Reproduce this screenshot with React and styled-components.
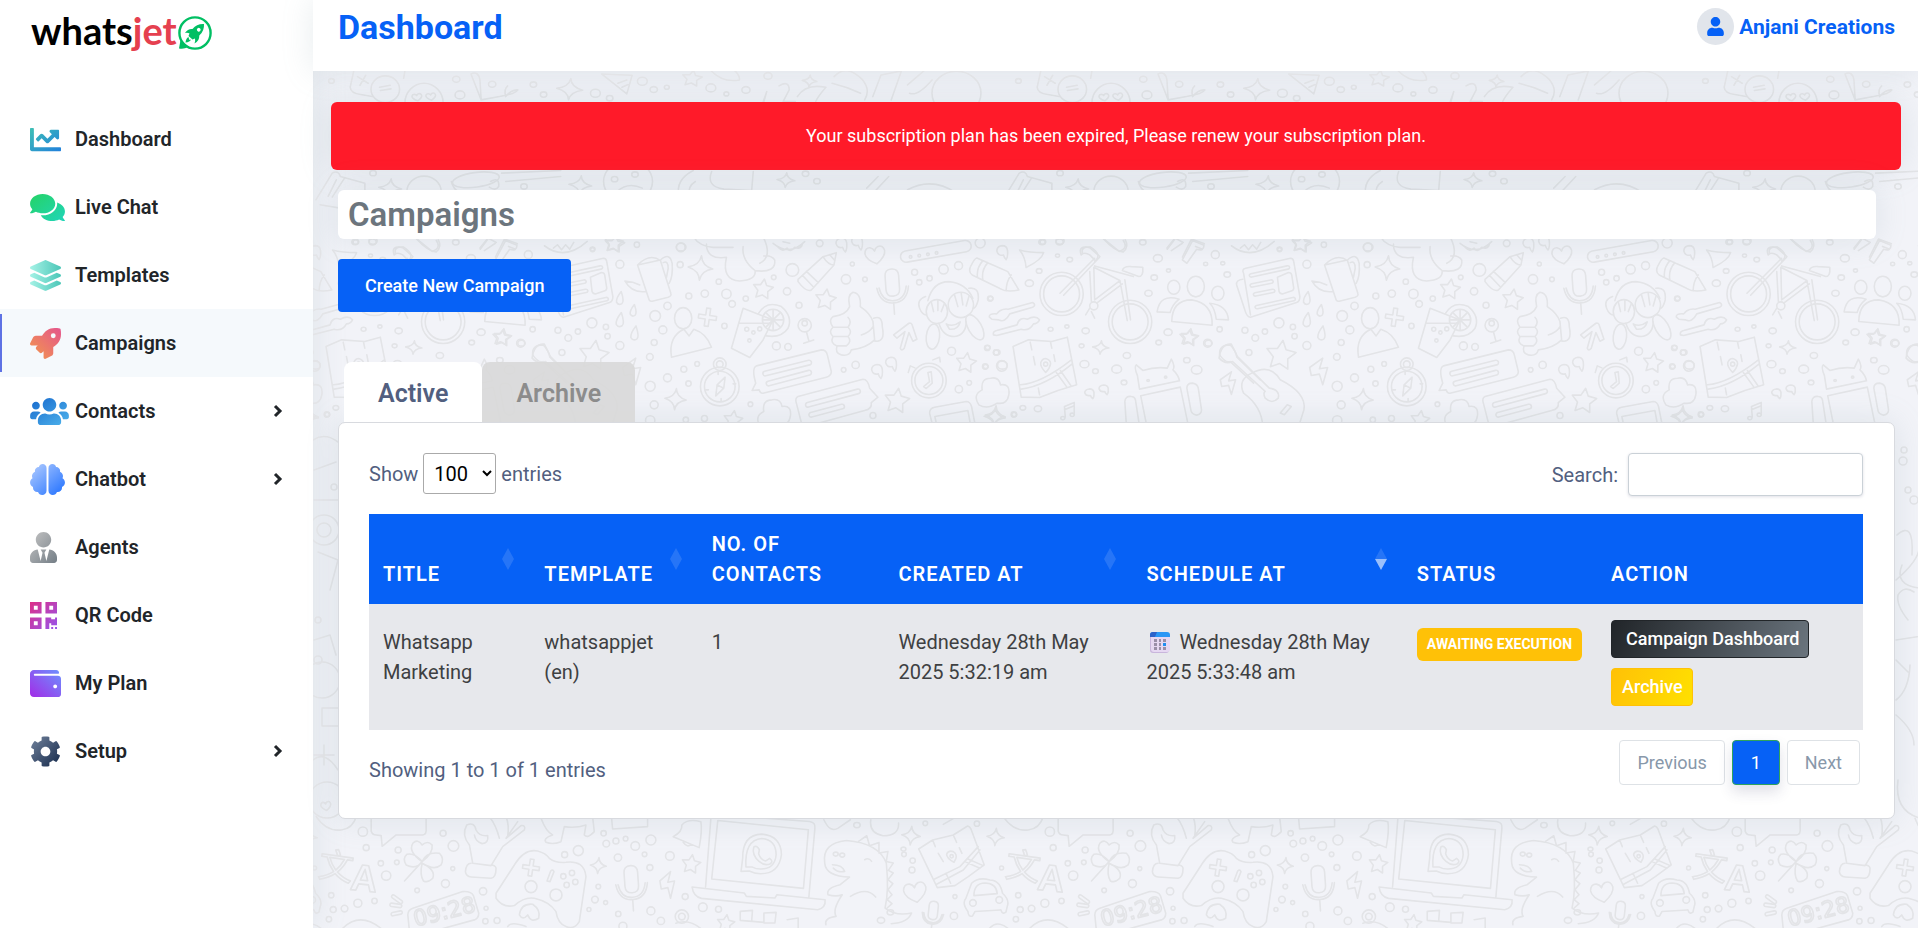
import React, { useState } from "react";
import styled, { createGlobalStyle } from "styled-components";
import {
  FaBrain,
  FaChartLine,
  FaCog,
  FaComments,
  FaLayerGroup,
  FaQrcode,
  FaRocket,
  FaUser,
  FaUsers,
  FaUserTie,
  FaWallet,
} from "react-icons/fa";

/* ---------- doodle wallpaper ---------- */

const TILE_WIDTH = 687;
const TILE_HEIGHT = 857;

const path = (d) => `<path d="${d}"/>`;
const oval = (x, y, rx, ry = rx, turn = 0) =>
  `<ellipse cx="${x}" cy="${y}" rx="${rx}" ry="${ry}" transform="rotate(${turn} ${x} ${y})"/>`;
const at = (x, y, size, turn, d) =>
  `<g transform="translate(${x} ${y}) rotate(${turn}) scale(${size})">${path(d)}</g>`;
const star = (x, y, r, turn = 8) =>
  at(x, y, r / 10, turn, "M0-10L3-4L10-3L5 2L6 9L0 6L-6 9L-5 2L-10-3L-3-4Z");
const spark = (x, y, r) =>
  at(x, y, r / 10, 5, "M0-10Q1-2 10 0Q1 2 0 10Q-1 2-10 0Q-1-2 0-10Z");
const heart = (x, y, r, turn = -10) =>
  at(x, y, r / 10, turn, "M0 9Q-10 3-10-3Q-9-9-4-8Q-1-7 0-4Q1-7 4-8Q9-9 10-3Q10 3 0 9Z");
const bolt = (x, y, r) => at(x, y, r / 10, 0, "M3-10L-5-3L-4 3L1 2L3 10L6-3L1-2Z");
const drop = (x, y, r) => at(x, y, r / 10, 0, "M2-10Q7 5 3 8Q-2 11-5 6Q-6 0 2-10Z");
const quote = (x, y, r) =>
  at(x, y, r / 10, 0, "M6 12Q9 8 8-2Q7-9 0-9Q-8-8-8-1Q-6 7 2 5Q3 9 6 12Z");
const cloud = (x, y, r) =>
  at(x, y, r / 10, 0, "M-8 8Q-12 2-6-1Q-7-8-1-8Q4-9 5-4Q11-5 10 2Q9 8 3 7Q-3 11-8 8Z");
const pill = (x, y, w, h, turn) =>
  `<rect x="${x}" y="${y}" width="${w}" height="${h}" rx="${h / 2}" transform="rotate(${turn} ${x} ${y})"/>`;
const plus = (x, y, r) =>
  at(x, y, r / 10, 8, "M-2-9H2V-2H9V2H2V9H-2V2H-9V-2H-2Z");
const dots = (list) => list.map(([x, y, r]) => oval(x, y, r)).join("");
const mic = (x, y, r, turn = -4) =>
  at(
    x,
    y,
    r / 10,
    turn,
    "M-3-7Q-3-10 0-10Q3-10 3-7V-1Q3 2 0 2Q-3 2-3-1ZM-7-2Q-6 5 0 5Q6 5 7-2M-6-2Q-5 4 0 4Q5 4 6-2M0 5V10"
  );

const upperRow = [
  path("M85 200L74 262Q75 280 100 284L128 290M210 200L205 235M92 230L118 250M112 226L98 256"),
  oval(160, 268, 35, 40),
  path("M146 262L172 256M148 272L174 267"),
  oval(255, 310, 47, 60),
  heart(238, 292, 12),
  heart(272, 290, 12),
  path("M370 222L395 300L440 290Q480 282 485 270Q470 268 455 290Q450 268 460 258M370 222Q388 212 392 240L395 300"),
  spark(612, 268, 32),
  path("M690 222L765 226L752 282ZM730 250L752 240M740 262L755 254"),
  star(912, 235, 24),
  path("M950 200Q980 250 1028 240Q1030 225 1010 205"),
  path("M1085 310L1095 275L1088 305M1125 258Q1150 240 1150 270L1135 305H1165"),
  path("M1170 290Q1190 250 1240 262Q1220 290 1215 305M1260 230Q1290 190 1330 240Q1350 270 1335 300M1255 250Q1290 260 1325 280"),
  path("M1355 290L1375 225L1425 213L1400 300"),
  path("M1440 255L1480 213M1445 280Q1465 290 1500 240"),
  spark(1200, 243, 18),
  oval(1560, 280, 60, 66),
  path("M-10 600L30 520Q45 510 50 530L110 550V620M20 590L40 540M30 592L60 535M0 615L50 625L110 600"),
  spark(172, 565, 28),
  oval(255, 575, 42, 46),
  oval(382, 540, 58, 22, -10),
  path("M322 545Q330 590 390 590M418 545Q440 530 438 560Q430 575 415 562M445 520L590 512M455 545L590 530"),
  oval(755, 545, 60, 62),
  dots([[722, 538, 8], [772, 524, 8]]),
  path("M728 575Q755 545 790 565"),
  spark(638, 556, 28),
  path("M880 590Q870 540 915 512M905 590Q900 560 920 545M960 515Q945 560 990 568L1058 572L1062 515"),
  spark(1142, 541, 22),
  path("M1340 565L1368 530M1362 572L1394 530M1440 570Q1500 530 1560 580"),
  path("M392 745L412 715L432 728M430 772L452 718L484 732M462 740L478 748"),
  path("M550 738Q600 785 655 725M572 745L582 735L592 750L602 735L612 748L622 728"),
  path("M185 760Q180 740 205 742Q235 765 215 785M240 720L275 755Q298 745 285 722"),
  star(722, 733, 24),
  dots([
    [334, 238, 9], [422, 253, 9], [343, 285, 12], [523, 254, 8], [548, 284, 8],
    [675, 280, 12], [710, 295, 8], [790, 244, 12], [818, 269, 9], [850, 262, 6],
    [958, 264, 12], [996, 282, 6], [1044, 270, 10], [1098, 228, 10], [1190, 522, 8],
    [1218, 544, 8], [130, 520, 8], [500, 560, 8], [28, 243, 7], [86, 727, 8],
    [130, 724, 10], [668, 748, 6], [885, 742, 12],
  ]),
].join("");

const middleRow = [
  star(282, 345, 44),
  star(790, 147, 30),
  star(978, 178, 31),
  star(1192, 482, 37),
  star(1400, 368, 30),
  star(342, 8, 28),
  star(8, 292, 26),
  spark(602, 84, 37),
  spark(527, 478, 32),
  spark(1487, 528, 30),
  star(700, 540, 28),
  path("M413 75L448 180Q452 186 460 183L505 172Q516 168 513 160L482 62Q450 38 413 75ZL482 60M420 135Q400 125 375 123Q395 160 438 155M482 60Q510 35 517 70Q520 110 508 130M490 68Q505 60 505 85L500 112"),
  drop(360, 175, 20),
  drop(400, 212, 18),
  drop(360, 240, 22),
  drop(404, 280, 22),
  path("M895 118L970 50L1010 38L1003 75L935 150Q920 158 895 125ZM970 50Q985 75 1003 75M908 106L942 142M920 94L956 128M990 44L1004 60"),
  heart(1127, 45, 30),
  pill(1200, 36, 215, 34, -10),
  dots([[1233, 51, 4], [1259, 47, 4], [1285, 43, 4], [1311, 39, 4]]),
  path("M580 -10Q600 20 640 22H700M620 12Q620 60 680 52Q665 120 720 123Q770 120 766 92Q830 100 825 60Q815 45 792 48M730 20Q725 60 766 92M790 -10Q820 50 780 70"),
  path("M820 10Q870 50 915 5M835 22Q850 38 862 24Q872 40 885 22Q905 30 908 12M850 5L870 10"),
  mic(1180, 155, 68),
  path("M1000 230Q1040 225 1050 200Q1042 165 1060 157Q1085 160 1082 200Q1112 220 1120 245L1125 300Q1100 325 1055 330Q1050 350 1025 345Q1005 340 1012 318Q990 310 1000 290Q985 275 1000 262Q985 240 1000 230M1000 262H1045Q1058 245 1045 232M1003 290H1045Q1060 275 1045 262M1012 318H1040Q1058 305 1045 290M1122 235Q1148 225 1148 260Q1158 310 1125 303M1085 285Q1110 278 1120 260"),
  path("M730 205L695 325L750 353L790 300L820 240ZM718 250H815"),
  path("M775 222Q800 180 845 200Q880 230 865 265Q845 295 800 288"),
  oval(820, 240, 32),
  path("M820 210V270M790 240H850M799 219L841 261M841 219L799 261"),
  dots([[741, 268, 6], [780, 267, 6], [761, 278, 5], [749, 302, 5], [915, 256, 20], [915, 250, 8]]),
  path("M920 275L928 305M912 310L942 300"),
  oval(550, 235, 26, 32),
  path("M515 352Q505 290 552 268L568 288L582 268Q620 280 635 322Z"),
  plus(623, 232, 30),
  dots([[660, 440, 58], [660, 440, 46], [660, 373, 19], [660, 373, 10]]),
  path("M676 412L672 445L648 468L652 435ZM652 435L672 445M655 396V404M618 450H626M700 432H708M664 484V476"),
  path("M770 378L965 330Q980 330 983 345L995 395Q995 408 980 412L790 460Q782 462 778 450L757 452L768 430Q755 385 770 378Z"),
  pill(788, 396, 150, 14, -14),
  pill(798, 426, 140, 14, -15),
  path("M895 470L1090 418Q1105 418 1110 445L1135 472L1115 488Q1118 508 1095 512L920 560M895 470Q885 475 890 490L908 560"),
  pill(916, 490, 170, 14, -15),
  pill(926, 520, 110, 14, -15),
  cloud(822, 520, 50),
  cloud(1478, 455, 50),
  path("M1182 285L1228 250Q1236 248 1238 256L1252 298L1240 304L1228 278L1214 325Q1206 335 1202 325L1216 275L1192 295Z"),
  quote(1132, 392, 20),
  quote(1174, 370, 20),
  quote(1025, 12, 20),
  quote(1072, 6, 20),
  quote(1508, 35, 20),
  dots([[1288, 422, 52], [1288, 422, 42]]),
  path("M1285 398L1290 425L1272 440L1280 446L1298 430L1295 396ZM1300 360L1320 352L1322 366M1226 398L1232 378L1246 384"),
  path("M1285 182Q1300 125 1348 125Q1400 130 1420 175M1278 170Q1250 180 1260 205Q1268 225 1280 225M1408 145Q1440 140 1436 180Q1430 205 1420 205M1318 250Q1330 290 1365 290Q1400 285 1400 245M1340 252Q1362 262 1382 246Q1375 270 1350 268Z"),
  oval(1312, 215, 32, 36),
  oval(1384, 195, 38, 38),
  path("M1295 185L1302 215M1315 180V212M1335 190L1325 215M1365 165L1375 200M1385 160L1390 195M1408 170L1400 198"),
  oval(1300, 290, 20, 38, 6),
  oval(1426, 262, 20, 42, -30),
  path("M1432 54L1525 95L1558 150Q1520 158 1500 145L1418 105Q1405 95 1414 78Q1425 55 1432 54ZM1450 62Q1430 85 1434 112M1465 68Q1445 90 1450 120M1535 105Q1520 125 1520 153"),
  path("M1300 560L1290 520Q1290 505 1305 502L1400 485Q1412 485 1416 500L1428 560M1312 560L1306 530L1405 512L1414 560"),
  path("M98 345Q95 315 130 315Q145 330 150 352L220 420M98 345Q115 370 130 365L200 430"),
  dots([
    [543, 22, 13], [411, 14, 8], [278, 29, 6], [85, 44, 12], [360, 73, 12], [541, 74, 9],
    [657, 125, 8], [615, 161, 11], [567, 168, 9], [503, 198, 11], [466, 228, 16],
    [489, 270, 12], [463, 308, 9], [680, 162, 14], [697, 192, 10], [738, 176, 8],
    [674, 258, 8], [822, 112, 7], [878, 90, 19], [862, 154, 11], [898, 196, 9],
    [960, 10, 10], [1058, 72, 6], [1039, 118, 14], [1096, 118, 7], [1245, 97, 9],
    [1259, 127, 8], [1290, 115, 8], [1332, 88, 14], [1377, 77, 12], [1442, 9, 15],
    [830, 318, 12], [865, 321, 10], [1068, 375, 11], [1032, 390, 7], [276, 249, 15],
    [318, 261, 8], [323, 289, 8], [234, 275, 8], [174, 271, 9], [205, 294, 10],
    [98, 268, 8], [62, 310, 12], [360, 317, 12], [186, 338, 9], [450, 351, 10],
    [592, 372, 7], [552, 388, 9], [503, 414, 12], [451, 439, 15], [566, 431, 8],
    [463, 495, 12], [752, 493, 7], [451, 542, 14], [558, 540, 8], [614, 536, 9],
    [1356, 334, 12], [1463, 324, 8], [1490, 338, 8], [1457, 380, 8], [1507, 378, 16],
    [1409, 429, 7], [1378, 448, 11], [1120, 527, 9], [1472, 176, 8], [1543, 524, 8],
  ]),
].join("");

const bikeRow = [
  oval(249, 342, 53, 65),
  oval(249, 342, 44, 54),
  oval(417, 426, 53, 65),
  oval(417, 426, 44, 54),
  path("M245 340L330 235M254 346L342 232M318 275L322 365M328 262L330 360L392 302ZM330 258L425 290M335 370L398 312M392 302L410 422M404 300L418 420M297 225Q288 195 318 203L343 230M297 225Q305 215 318 225L330 240M398 272Q400 258 420 260L448 262Q450 290 438 290Z"),
  oval(328, 378, 10, 12),
  path("M318 385L308 405M322 395L330 415"),
  path("M72 412Q70 400 90 402Q100 385 118 388L178 368Q188 375 178 382L122 402Q110 430 95 420L78 418ZM82 465Q80 455 90 452L140 435Q145 410 165 418Q185 405 195 420Q190 432 180 432Q170 455 150 448L90 467Z"),
  oval(524, 322, 15, 21),
  oval(578, 320, 21, 31),
  oval(632, 340, 15, 21),
  path("M519 425Q520 360 568 360Q620 370 618 436ZM483 396Q490 340 537 358Q520 375 515 398ZM612 370Q655 375 658 420L628 418Q625 385 612 370Z"),
  path("M695 280Q690 268 700 265L810 235Q817 235 818 245L833 350Q833 365 825 368L712 412Q703 412 698 390L678 315Q676 300 693 298M695 280L712 405"),
  pill(708, 283, 102, 10, -15),
  pill(710, 313, 58, 10, -14),
  pill(718, 340, 54, 10, -14),
  pill(722, 378, 102, 10, -15),
  path("M778 292L805 278Q812 278 813 285L818 325Q818 332 810 334L790 342Q784 342 782 335Z"),
  path("M130 500L168 480L225 485L263 472L286 615L240 632L195 653L150 652ZM148 615Q200 610 273 540M150 628Q210 618 275 552M236 578L262 622M246 572L272 618M172 487L176 510M180 530L184 555M222 488L225 505M230 525L233 545M192 625L195 645"),
  path("M210 578Q196 560 198 548Q202 536 210 536Q222 540 222 552Q220 566 210 578Z"),
  oval(210, 553, 5, 6),
  path("M440 628L435 588Q426 560 432 555L448 572Q480 560 508 565L518 538Q528 560 522 570Q535 585 538 603ZM443 648L540 622L560 740M443 648L458 740M408 740L404 665Q405 648 420 650Q428 650 430 660L440 740"),
  path("M556 625Q556 610 570 610Q582 612 584 625L592 690Q592 704 580 706Q568 704 566 692Z"),
  dots([[461, 602, 3], [504, 592, 3]]),
  path("M635 535Q640 490 665 493L680 530L758 625Q785 630 780 655Q765 675 748 655Q742 640 748 635L668 545Q650 555 635 535ZM715 580Q760 550 785 600Q850 640 843 690L830 740M715 580Q680 600 695 640Q740 680 742 740M785 700L802 675L812 680L795 705Z"),
  bolt(655, 610, 34),
  bolt(877, 575, 40),
  path("M258 712L256 680L280 668V700M256 690L280 678"),
  dots([[252, 715, 5], [275, 705, 5]]),
  spark(85, 712, 26),
  spark(345, 503, 20),
  star(560, 473, 22),
  quote(317, 640, 14),
  quote(352, 628, 14),
  path("M146 210Q170 218 205 218Q200 240 162 263Q160 230 146 210Z"),
  path("M508 208L525 180M518 212L545 190M545 240L570 182L598 196Q598 215 580 208L556 250ZM350 175Q380 215 400 216Q415 200 405 180"),
  dots([
    [203, 186, 7], [244, 186, 9], [239, 227, 5], [269, 239, 7], [194, 273, 7],
    [170, 310, 10], [75, 356, 6], [222, 448, 6], [262, 440, 5], [308, 453, 9],
    [298, 498, 6], [409, 527, 9], [384, 568, 12], [305, 553, 11], [332, 574, 7],
    [402, 608, 7], [510, 457, 10], [487, 488, 7], [609, 490, 9], [556, 541, 8],
    [580, 570, 13], [511, 272, 5], [476, 293, 8], [485, 235, 11], [462, 340, 9],
    [602, 252, 5], [644, 250, 5], [655, 284, 8], [448, 187, 8], [191, 687, 9],
    [154, 684, 7], [133, 704, 6], [104, 556, 12], [63, 560, 6], [90, 518, 8], [68, 503, 6],
  ]),
].join("");

const lowerRow = [
  path("M56 102L98 75L160 60L203 33Q210 34 214 44L253 150L205 185L165 212L112 218ZM104 192L180 155L235 95M110 208L190 165L240 105M195 140L240 160M204 132L250 152M98 75L106 95M115 115L130 140M138 175L152 205M160 60L170 82M178 98L186 115"),
  path("M162 142Q140 130 140 118Q145 105 160 110Q172 118 168 130Z"),
  oval(155, 124, 5),
  spark(33, 62, 28),
  spark(287, 66, 26),
  heart(46, 232, 34),
  mic(98, 305, 46, 6),
  path("M198 250L215 205Q235 185 270 195Q300 195 308 235Q330 255 322 275L318 292Q308 300 303 285L225 290L218 303Q205 308 204 290Q185 265 198 250ZM222 242Q222 205 255 204Q290 205 292 236Z"),
  dots([[219, 264, 10], [298, 255, 10]]),
  `<text x="318" y="190" font-size="104" font-family="Noto Sans CJK SC" transform="rotate(8 360 150)">文</text>`,
  `<text x="414" y="228" font-size="112" font-weight="bold" font-family="Liberation Sans" transform="rotate(6 450 190)">A</text>`,
  path("M475 -10V48Q478 60 490 60L505 62L508 94L550 60H630Q642 58 640 40V-10"),
  path("M628 140Q585 110 600 85Q615 70 628 90Q645 75 658 90Q662 115 628 140Q640 110 680 115Q695 130 685 150Q665 168 628 145Q670 165 660 190Q645 205 632 198Q620 180 628 145M628 140Q610 165 580 150Q568 130 582 118Q605 112 628 140L575 198"),
  path("M762 30Q745 60 770 90L780 145M762 30Q785 20 790 45Q800 65 825 62Q828 85 808 86Q788 80 785 60M780 145L835 152L870 95L935 45Q940 30 925 32L880 70M860 70Q850 30 830 5M885 65Q890 30 880 5M880 70L915 20M775 145Q760 145 758 170Q760 185 775 186L835 190Q850 188 850 160Q848 150 835 150"),
  path("M850 235L905 150Q935 100 975 108Q1000 115 1010 130Q1030 145 1060 142Q1115 135 1120 185L1100 320Q1085 345 1060 335Q1035 325 1030 290Q1010 260 965 250Q935 245 905 272Q870 280 850 250Z"),
  plus(955, 158, 28),
  dots([[955, 215, 18], [1030, 240, 18], [1052, 184, 8], [1078, 174, 8], [1062, 210, 8], [1088, 201, 8]]),
  path("M1003 198L1014 168Q1020 162 1024 170L1012 200Z"),
  path("M590 350L585 300Q585 285 600 280L750 230Q775 228 782 242L798 295Q798 310 785 315L620 360"),
  `<text x="608" y="335" font-size="66" font-family="DejaVu Sans" transform="rotate(-14 608 335)">09:28</text>`,
  pill(540, 238, 38, 10, 35),
  pill(532, 264, 36, 10, 8),
  pill(534, 294, 34, 10, -12),
  path("M920 300Q925 265 960 268Q985 285 978 310Q955 325 945 300Q930 318 920 300ZM885 335Q895 318 940 335"),
  spark(1157, 152, 24),
  mic(1258, 220, 68),
  bolt(1362, 210, 40),
  star(1436, 147, 28),
  star(1540, 325, 26),
  path("M1382 65Q1410 50 1408 30Q1425 10 1465 20Q1470 45 1460 98ZM1412 82Q1425 100 1435 88M1197 10L1200 42L1305 35V5"),
  path("M985 10Q1000 50 1020 60Q990 70 1000 82Q1020 90 1045 80L1055 35Q1090 40 1120 30L1115 60Q1125 72 1145 50L1140 5"),
  dots([[1408, 305, 20], [1408, 305, 10]]),
  path("M1390 325Q1430 310 1470 345M265 345Q290 310 330 345M385 345Q440 285 510 345M310 5Q340 50 385 45Q420 40 430 5M130 28L170 5"),
  dots([
    [450, 50, 14], [460, 98, 9], [556, 105, 9], [552, 142, 7], [504, 145, 8], [520, 182, 14],
    [485, 258, 8], [435, 265, 12], [395, 281, 10], [361, 284, 9], [355, 241, 8],
    [348, 313, 8], [305, 159, 6], [165, 245, 6], [162, 303, 11], [231, 26, 8],
    [76, 25, 7], [38, 137, 8], [36, 165, 9], [12, 118, 7], [613, 226, 7], [698, 206, 12],
    [720, 161, 6], [722, 93, 16], [691, 55, 9], [811, 229, 11], [820, 280, 6],
    [818, 319, 8], [853, 317, 9], [1056, 119, 9], [1097, 107, 15], [1173, 55, 8],
    [1181, 86, 10], [1210, 78, 9], [1239, 71, 7], [1268, 93, 13], [1315, 75, 15],
    [1216, 128, 11], [1296, 118, 7], [1312, 158, 9], [1372, 123, 13], [1157, 215, 7],
    [1147, 254, 10], [1179, 263, 6], [1129, 284, 6], [1217, 297, 8], [1315, 288, 12],
    [1345, 318, 11], [1231, 334, 12], [1418, 245, 9], [1471, 277, 13], [1518, 283, 9],
  ]),
].join("");

const laptopRow = [
  path("M945 862L958 655Q960 640 975 645L1200 665Q1215 668 1213 685L1198 895M960 838L975 662L1197 690L1185 866ZM912 862L1040 880L1045 890L1115 895L1120 885L1238 900Q1240 925 1220 930L935 896Q915 890 912 862Z"),
  path("M1032 815L1036 775Q1035 705 1083 703Q1130 708 1131 765Q1125 822 1080 822Q1065 822 1052 814ZM1044 802Q1040 720 1083 716Q1118 720 1118 765Q1115 808 1080 808Q1068 808 1060 802ZM1063 742Q1070 735 1077 750L1075 762Q1080 780 1092 784L1102 776Q1112 785 1104 792Q1090 800 1076 785Q1058 765 1063 742Z"),
  path("M1237 790Q1230 730 1290 722Q1370 730 1388 790Q1395 870 1385 925Q1410 950 1450 940Q1440 970 1400 972M1237 790Q1240 830 1298 832L1275 855Q1240 865 1245 885Q1265 892 1280 885Q1255 930 1265 950Q1235 955 1240 975M1300 890Q1340 860 1362 892M1256 795Q1280 795 1286 815Q1270 820 1258 805M1335 780Q1345 772 1352 785M1320 725L1340 708L1347 738L1370 728L1370 760L1392 755L1388 785L1405 790L1393 812L1405 820L1392 840L1404 852L1392 870L1402 885L1390 900L1402 912L1390 925"),
  dots([[1264, 763, 6], [1280, 766, 6], [1375, 962, 9], [1398, 938, 8]]),
  path("M1030 935L1060 932L1058 965L1030 962ZM1088 940L1118 938L1115 970H1088ZM1145 960L1172 955V985M1060 965L1088 968M1350 660Q1345 700 1380 708Q1420 708 1418 670M1235 660Q1250 700 1270 685L1300 660"),
  dots([[1430, 748, 6], [1316, 676, 8]]),
].join("");

const edgeRow = [
  oval(324, 530, 15),
  oval(324, 530, 7),
  oval(322, 680, 18),
  oval(327, 800, 18),
  heart(326, 806, 5),
  path("M313 440Q325 432 338 442M314 470L336 462M314 500H338M318 552L338 560L330 590M314 640L330 635L336 655M322 708H340V726H322ZM313 760Q325 750 338 770M324 745V765M314 755H334"),
  path("M523 535Q540 520 538 555M522 580Q545 560 545 548M528 565Q520 585 545 588M534 620Q522 605 524 595Q530 585 540 592M522 640L548 636M522 660L534 672M522 700Q535 690 536 665M522 715Q540 730 540 745M524 780Q520 810 545 818"),
  dots([[529, 461, 4], [534, 490, 3], [540, 500, 4], [530, 450, 3], [318, 660, 4], [334, 487, 3], [318, 620, 3]]),
].join("");

const sheet = `
  <g transform="translate(320 0) scale(.408 .333)">${upperRow}</g>
  <g transform="translate(500 240) scale(.333)">${middleRow}</g>
  <g transform="translate(273 180) scale(.408 .333)">${bikeRow}</g>
  <g transform="translate(213 815) scale(.333)">${lowerRow}</g>
  <g transform="translate(320 600) scale(.408 .333)">${laptopRow}</g>
  ${edgeRow}`;

const wallpaper = `<svg xmlns="http://www.w3.org/2000/svg" width="${TILE_WIDTH}" height="${TILE_HEIGHT}">
  <style>path,ellipse,rect,text{vector-effect:non-scaling-stroke}</style>
  <g fill="none" stroke="#e3e4e7" stroke-width="1.6" stroke-linecap="round" stroke-linejoin="round">
    <g transform="translate(-313 -71)">${sheet}</g>
    <g transform="translate(${TILE_WIDTH - 313} -71)">${sheet}</g>
    <g transform="translate(${-TILE_WIDTH - 313} -71)">${sheet}</g>
  </g>
</svg>`;

const wallpaperUrl = `data:image/svg+xml,${encodeURIComponent(wallpaper)
  .replace(/\(/g, "%28")
  .replace(/\)/g, "%29")
  .replace(/'/g, "%27")}`;

/* ---------- styles ---------- */

const blue = "#0661f6";
const softShadow = "0 0 32px rgba(136, 160, 170, 0.2)";

const GlobalStyle = createGlobalStyle`
  * {
    box-sizing: border-box;
  }

  body {
    margin: 0;
    background: #f2f3f8;
    color: #525f7f;
    font-family: Roboto, "Liberation Sans", sans-serif;
    font-size: 20px;
    line-height: 30px;
  }

  button, input, select {
    font-family: inherit;
  }
`;

const Page = styled.div`
  display: flex;
  min-height: 100vh;
`;

const Sidebar = styled.aside`
  width: 313px;
  flex-shrink: 0;
  background: #fff;
  box-shadow: ${softShadow};
`;

const Brand = styled.a`
  display: flex;
  align-items: center;
  height: 60px;
  padding-left: 31px;
  color: #000;
  font-family: Lato, sans-serif;
  font-size: 38px;
  font-weight: 700;
  text-decoration: none;
`;

const BrandAccent = styled.span`
  color: #e5404f;
`;

const BrandMark = styled.svg`
  width: 36px;
  height: 36px;
  margin-top: 6px;
`;

const Menu = styled.nav`
  display: flex;
  flex-direction: column;
  padding-top: 45px;
`;

const MenuLink = styled.a`
  display: flex;
  align-items: center;
  height: 68px;
  padding: 0 30px;
  position: relative;
  background: ${(props) => (props.$active ? "#f5f9fc" : "transparent")};
  color: #212529;
  font-weight: 600;
  text-decoration: none;

  &::before {
    content: "";
    display: ${(props) => (props.$active ? "block" : "none")};
    position: absolute;
    left: 0;
    top: 5px;
    bottom: 5px;
    width: 2px;
    background: #5e72e4;
  }
`;

const MenuIcon = styled.span`
  display: flex;
  width: 45px;

  svg {
    width: ${(props) => props.$width}px;
    height: 31px;
    fill: url(#${(props) => props.$paint});
  }
`;

const MenuArrow = styled.svg`
  width: 10px;
  height: 14px;
  margin-left: auto;
`;

const HiddenDefs = styled.svg`
  position: absolute;
  width: 0;
  height: 0;
`;

const Main = styled.main`
  flex: 1;
  min-width: 0;
  display: flex;
  flex-direction: column;
`;

const Header = styled.header`
  display: flex;
  align-items: flex-start;
  justify-content: space-between;
  height: 71px;
  padding: 8px 23px 0 25px;
  background: #fff;
  box-shadow: ${softShadow};
`;

const PageName = styled.a`
  color: ${blue};
  font-size: 34px;
  font-weight: 700;
  line-height: 38px;
  text-decoration: none;
`;

const UserLink = styled.a`
  display: flex;
  align-items: center;
  gap: 5px;
  color: ${blue};
  font-size: 21px;
  font-weight: 700;
  text-decoration: none;
`;

const Avatar = styled.span`
  display: flex;
  align-items: center;
  justify-content: center;
  width: 37px;
  height: 37px;
  border-radius: 50%;
  background: #e1e5eb;
  font-size: 19px;
`;

const Content = styled.div`
  flex: 1;
  padding: 31px 17px 40px 18px;
  background-image: url("${wallpaperUrl}");
`;

const Alert = styled.div`
  padding: 19px;
  border-radius: 6px;
  background: #ff1a29;
  box-shadow: ${softShadow};
  color: #fff;
  font-size: 18px;
  text-align: center;
`;

const Section = styled.section`
  padding: 0 6px 0 7px;
`;

const Heading = styled.h1`
  margin: 20px 19px 20px 0;
  padding: 0 10px;
  border-radius: 6px;
  background: #fff;
  box-shadow: ${softShadow};
  color: #6c757d;
  font-size: 33px;
  font-weight: 600;
  line-height: 49px;
`;

const CreateButton = styled.button`
  display: block;
  height: 53px;
  padding: 0 27px;
  border: 0;
  border-radius: 4px;
  background: ${blue};
  color: #fff;
  font-size: 18px;
  font-weight: 500;
`;

const Tabs = styled.div`
  display: flex;
  margin-top: 50px;
  padding-left: 6px;
`;

const Tab = styled.button`
  height: 60px;
  padding: 3px 34px 0;
  border: 0;
  border-radius: 8px 8px 0 0;
  background: ${(props) => (props.$active ? "#fff" : "rgba(217, 217, 217, 0.92)")};
  color: ${(props) => (props.$active ? "#525f7f" : "#8c8c8c")};
  font-size: 25px;
  font-weight: 600;
`;

const Card = styled.div`
  padding: 30px 31px 33px 30px;
  border: 1px solid #d8dadf;
  border-radius: 7px;
  background: #fff;
  box-shadow: ${softShadow};
`;

const TableBar = styled.div`
  display: flex;
  align-items: flex-start;
  justify-content: space-between;
  margin-bottom: 18px;
`;

const LengthLabel = styled.label`
  display: flex;
  align-items: center;
  gap: 5px;
`;

const LengthSelect = styled.select`
  width: 73px;
  height: 41px;
  padding: 4px 6px;
  border: 1px solid #aaa;
  border-radius: 3px;
  background: transparent;
  color: #000;
  font-size: 20px;
`;

const SearchLabel = styled.label`
  display: flex;
  align-items: center;
  gap: 10px;
`;

const SearchInput = styled.input`
  width: 235px;
  height: 43px;
  padding: 5px;
  border: 1px solid #cad1d7;
  border-radius: 4px;
  background: #fff;
  box-shadow: 0 1px 3px rgba(50, 50, 93, 0.15);
  font-size: 18px;
`;

const Table = styled.table`
  width: 100%;
  border-collapse: collapse;
  table-layout: fixed;
`;

const HeadCell = styled.th`
  width: ${(props) => props.$width};
  padding: 15px 16px 15px 14px;
  background: ${blue};
  color: #fff;
  font-weight: 600;
  letter-spacing: 1px;
  text-align: left;
  text-transform: uppercase;
`;

const HeadInner = styled.div`
  display: flex;
  align-items: flex-end;
  justify-content: space-between;
  min-height: 60px;
`;

const SortMark = styled.svg`
  flex-shrink: 0;
  align-self: center;
  width: 12px;
  height: 22px;
`;

const Cell = styled.td`
  padding: 23px 14px 14px;
  background: #e7e8ec;
  color: #3e4042;
  vertical-align: top;
`;

const ActionCell = styled(Cell)`
  padding-top: 16px;
  padding-bottom: 24px;
`;

const CalendarIcon = styled.svg`
  width: 20px;
  height: 21px;
  margin: 0 9px 0 4px;
  vertical-align: -4px;
`;

const Badge = styled.span`
  display: inline-block;
  padding: 0 10px;
  border-radius: 6px;
  background: #ffc107;
  color: #fff;
  font-size: 14px;
  font-weight: 700;
  line-height: 33px;
  text-transform: uppercase;
`;

const Actions = styled.div`
  display: flex;
  flex-direction: column;
  align-items: flex-start;
  gap: 10px;
`;

const ActionButton = styled.button`
  height: 38px;
  padding: 0 9px 2px ${(props) => (props.$dark ? "14px" : "10px")};
  border: 1px solid ${(props) => (props.$dark ? "#212529" : "#ffc107")};
  border-radius: 4px;
  background: ${(props) =>
    props.$dark
      ? "linear-gradient(110deg, #212529, #6a747d)"
      : "linear-gradient(110deg, #ffc107, #ffe000)"};
  color: #fff;
  font-size: 18px;
  font-weight: 500;
`;

const TableFooter = styled.div`
  display: flex;
  align-items: flex-end;
  justify-content: space-between;
  padding: 10px 3px 0 0;
`;

const Pager = styled.div`
  display: flex;
  gap: 7px;
`;

const PageButton = styled.button`
  min-width: 48px;
  height: 45px;
  padding: 0 17px;
  border: 1px solid ${(props) => (props.$current ? "#2fa35c" : "#dee2e6")};
  border-radius: 4px;
  background: ${(props) => (props.$current ? blue : "#fff")};
  box-shadow: ${(props) => (props.$current ? "0 7px 14px rgba(50, 50, 93, 0.15)" : "none")};
  color: ${(props) => (props.$current ? "#fff" : "#8898aa")};
  font-size: 18px;
`;

/* ---------- data ---------- */

const paints = [
  { id: "dashboard", from: "#3fc0b4", to: "#2180dc" },
  { id: "chat", from: "#25d366", to: "#20d5b8" },
  { id: "templates", from: "#a5f2e6", to: "#4cc7b8", flat: true },
  { id: "campaigns", from: "#f39a4a", to: "#e4558c", rising: true },
  { id: "contacts", from: "#1668cc", to: "#4fb4ec" },
  { id: "chatbot", from: "#b4ceff", to: "#1f6fff" },
  { id: "agents", from: "#c4c4c4", to: "#747e86" },
  { id: "qrcode", from: "#dc2f88", to: "#9755ec" },
  { id: "plan", from: "#a32be6", to: "#6c92ff", rising: true },
  { id: "setup", from: "#71829b", to: "#162a4c" },
];

const menu = [
  { label: "Dashboard", icon: FaChartLine, paint: "dashboard", width: 31 },
  { label: "Live Chat", icon: FaComments, paint: "chat", width: 35 },
  { label: "Templates", icon: FaLayerGroup, paint: "templates", width: 31 },
  { label: "Campaigns", icon: FaRocket, paint: "campaigns", width: 31, active: true },
  { label: "Contacts", icon: FaUsers, paint: "contacts", width: 39, nested: true },
  { label: "Chatbot", icon: FaBrain, paint: "chatbot", width: 35, nested: true },
  { label: "Agents", icon: FaUserTie, paint: "agents", width: 27 },
  { label: "QR Code", icon: FaQrcode, paint: "qrcode", width: 27 },
  { label: "My Plan", icon: FaWallet, paint: "plan", width: 31 },
  { label: "Setup", icon: FaCog, paint: "setup", width: 31, nested: true },
];

const columns = [
  { label: "Title", width: "10.8%", sort: "none" },
  { label: "Template", width: "11.2%", sort: "none" },
  { label: "No. of Contacts", width: "12.5%" },
  { label: "Created At", width: "16.6%", sort: "none" },
  { label: "Schedule At", width: "18.1%", sort: "desc" },
  { label: "Status", width: "13%" },
  { label: "Action", width: "17.8%" },
];

const campaigns = [
  {
    title: "Whatsapp Marketing",
    template: "whatsappjet (en)",
    contacts: 1,
    created: "Wednesday 28th May 2025 5:32:19 am",
    schedule: "Wednesday 28th May 2025 5:33:48 am",
    status: "Awaiting Execution",
  },
];

/* ---------- components ---------- */

function IconPaints() {
  return (
    <HiddenDefs aria-hidden="true">
      <defs>
        {paints.map(({ id, from, to, flat, rising }) => (
          <linearGradient
            key={id}
            id={id}
            x1="0"
            y1={rising ? "1" : "0"}
            x2="1"
            y2={flat || rising ? "0" : "1"}
          >
            <stop offset="0" stopColor={from} />
            <stop offset="1" stopColor={to} />
          </linearGradient>
        ))}
      </defs>
    </HiddenDefs>
  );
}

function Logo() {
  return (
    <Brand href="#home">
      whats<BrandAccent>jet</BrandAccent>
      <BrandMark viewBox="0 0 36 36" aria-hidden="true">
        <circle cx="18" cy="18" r="15.6" fill="none" stroke="#00bf63" strokeWidth="2.4" />
        <path d="M3.500 25L2 33.500Q7 34.500 11 32Z" fill="#00bf63" />
        <path
          d="M27 9Q20 8.500 15.500 14Q11 13.500 8 18Q11 17.500 12.500 18.500L11.500 21L15.500 24.500L18 23.500Q18.500 25.500 17.500 28.500Q22.500 26 22.300 20.500Q27.500 16 27 9ZM21 16.500A1.900 1.900 0 1 1 23.500 14A1.900 1.900 0 0 1 21 16.500Z"
          fill="#00bf63"
          fillRule="evenodd"
        />
        <path d="M11.500 22Q9 23 8.500 27.500Q13 27 14 24.500L12.500 25L12 24Z" fill="#00bf63" />
      </BrandMark>
    </Brand>
  );
}

function SortIcon({ direction }) {
  return (
    <SortMark viewBox="0 0 12 22" fill="#fff" aria-hidden="true">
      <path d="M6 0L12 11H0Z" opacity="0.13" />
      <path d="M0 11H12L6 22Z" opacity={direction === "desc" ? 0.6 : 0.13} />
    </SortMark>
  );
}

function Calendar() {
  return (
    <CalendarIcon viewBox="0 0 20 21" aria-hidden="true">
      <rect y="1" width="19" height="20" rx="3" fill="#c9b6dc" />
      <rect x="1" y="1" width="19" height="19" rx="3" fill="#e6d8f2" />
      <path d="M0 5V3Q0 0 3 0H17Q20 0 20 3V5Z" fill="#2a97f5" />
      <path d="M0 5V3Q0 0 3 0H7L5 5Z" fill="#2c62c9" />
      <g fill="#9a8fa8">
        <path d="M4 7h3v3h-3zM9 7h2v3h-2zM13 7h3v3h-3zM4 11h3v3h-3zM9 11h2v3h-2zM4 15h3v3h-3zM9 15h2v3h-2zM13 15h3v3h-3z" />
      </g>
      <path d="M13 11h3v3h-3z" fill="#1f8df0" />
    </CalendarIcon>
  );
}

function SideMenu() {
  return (
    <Sidebar>
      <IconPaints />
      <Logo />
      <Menu>
        {menu.map(({ label, icon: Icon, paint, width, active, nested }) => (
          <MenuLink key={label} href="#menu" $active={active}>
            <MenuIcon $paint={paint} $width={width}>
              <Icon />
            </MenuIcon>
            {label}
            {nested && (
              <MenuArrow viewBox="0 0 10 14" aria-hidden="true">
                <path d="M2 2L7 7L2 12" fill="none" stroke="#212529" strokeWidth="3" />
              </MenuArrow>
            )}
          </MenuLink>
        ))}
      </Menu>
    </Sidebar>
  );
}

function CampaignTable() {
  const [length, setLength] = useState("100");
  const [search, setSearch] = useState("");

  return (
    <Card>
      <TableBar>
        <LengthLabel>
          Show
          <LengthSelect value={length} onChange={(e) => setLength(e.target.value)}>
            <option>10</option>
            <option>25</option>
            <option>50</option>
            <option>100</option>
          </LengthSelect>
          entries
        </LengthLabel>
        <SearchLabel>
          Search:
          <SearchInput
            type="search"
            value={search}
            onChange={(e) => setSearch(e.target.value)}
          />
        </SearchLabel>
      </TableBar>

      <Table>
        <thead>
          <tr>
            {columns.map(({ label, width, sort }) => (
              <HeadCell key={label} $width={width}>
                <HeadInner>
                  {label}
                  {sort && <SortIcon direction={sort} />}
                </HeadInner>
              </HeadCell>
            ))}
          </tr>
        </thead>
        <tbody>
          {campaigns.map((row) => (
            <tr key={row.title}>
              <Cell>{row.title}</Cell>
              <Cell>{row.template}</Cell>
              <Cell>{row.contacts}</Cell>
              <Cell>{row.created}</Cell>
              <Cell>
                <Calendar />
                {row.schedule}
              </Cell>
              <Cell>
                <Badge>{row.status}</Badge>
              </Cell>
              <ActionCell>
                <Actions>
                  <ActionButton $dark>Campaign Dashboard</ActionButton>
                  <ActionButton>Archive</ActionButton>
                </Actions>
              </ActionCell>
            </tr>
          ))}
        </tbody>
      </Table>

      <TableFooter>
        <span>Showing 1 to 1 of 1 entries</span>
        <Pager>
          <PageButton>Previous</PageButton>
          <PageButton $current>1</PageButton>
          <PageButton>Next</PageButton>
        </Pager>
      </TableFooter>
    </Card>
  );
}

function App() {
  const [tab, setTab] = useState("Active");

  return (
    <Page>
      <GlobalStyle />
      <SideMenu />
      <Main>
        <Header>
          <PageName href="#dashboard">Dashboard</PageName>
          <UserLink href="#profile">
            <Avatar>
              <FaUser />
            </Avatar>
            Anjani Creations
          </UserLink>
        </Header>
        <Content>
          <Alert>
            Your subscription plan has been expired, Please renew your subscription plan.
          </Alert>
          <Section>
            <Heading>Campaigns</Heading>
            <CreateButton>Create New Campaign</CreateButton>
            <Tabs>
              {["Active", "Archive"].map((name) => (
                <Tab key={name} $active={tab === name} onClick={() => setTab(name)}>
                  {name}
                </Tab>
              ))}
            </Tabs>
            <CampaignTable />
          </Section>
        </Content>
      </Main>
    </Page>
  );
}

export default App;
